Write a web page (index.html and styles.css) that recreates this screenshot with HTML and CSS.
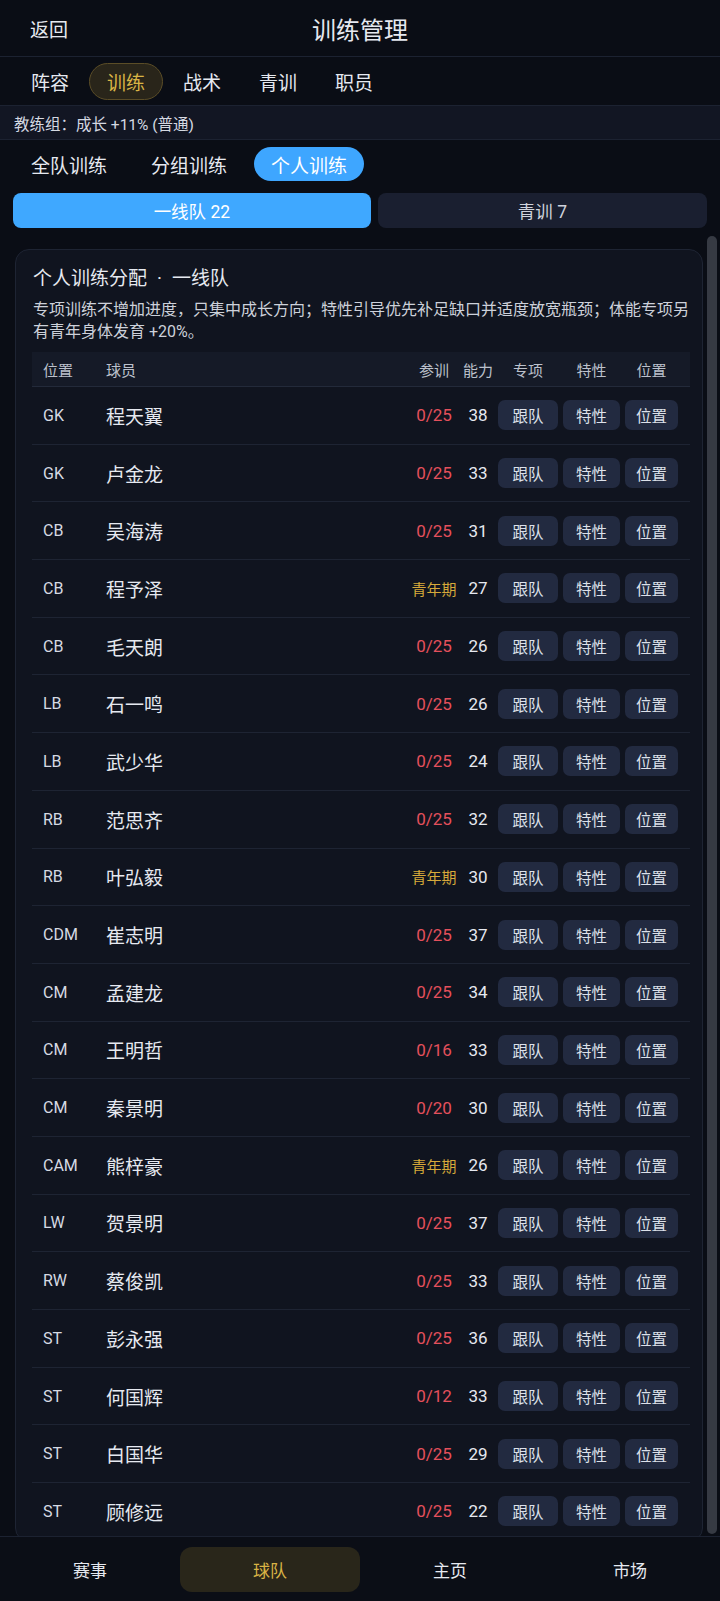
FILE: index.html
```html
<!DOCTYPE html>
<html lang="zh-CN">

<head>
    <meta charset="UTF-8">
    <meta name="viewport" content="width=device-width, initial-scale=1.0">
    <title>训练管理</title>
    <link rel="stylesheet" href="styles.css">
</head>

<body>
    <header class="topbar">
        <span class="back">返回</span>
        <h1 class="title">训练管理</h1>
        <span></span>
    </header>

    <nav class="tabs">
        <span class="tab">阵容</span>
        <span class="tab active">训练</span>
        <span class="tab">战术</span>
        <span class="tab">青训</span>
        <span class="tab">职员</span>
    </nav>

    <div class="coach">教练组：成长 +11% (普通)</div>

    <div class="modes">
        <span class="mode">全队训练</span>
        <span class="mode">分组训练</span>
        <span class="mode active">个人训练</span>
    </div>

    <div class="squads">
        <button class="squad active">一线队 22</button>
        <button class="squad">青训 7</button>
    </div>

    <main class="scroller">
        <section class="card">
            <h2 class="card-title">个人训练分配<span class="sep">·</span>一线队</h2>
            <p class="note">专项训练不增加进度，只集中成长方向；特性引导优先补足缺口并适度放宽瓶颈；体能专项另有青年身体发育 +20%。</p>

            <div class="table" id="playerTable">
                <div class="row head">
                    <span>位置</span>
                    <span>球员</span>
                    <span class="c">参训</span>
                    <span class="c">能力</span>
                    <span class="c">专项</span>
                    <span class="c">特性</span>
                    <span class="c">位置</span>
                </div>
            </div>
        </section>
        <div class="thumb"></div>
    </main>

    <footer class="bottom-nav">
        <span class="nav-item">赛事</span>
        <span class="nav-item active">球队</span>
        <span class="nav-item">主页</span>
        <span class="nav-item">市场</span>
    </footer>

    <script>
        // first team players: position, name, training count (or youth), ability
        const players = [
            ['GK', '程天翼', '0/25', 38],
            ['GK', '卢金龙', '0/25', 33],
            ['CB', '吴海涛', '0/25', 31],
            ['CB', '程予泽', '青年期', 27],
            ['CB', '毛天朗', '0/25', 26],
            ['LB', '石一鸣', '0/25', 26],
            ['LB', '武少华', '0/25', 24],
            ['RB', '范思齐', '0/25', 32],
            ['RB', '叶弘毅', '青年期', 30],
            ['CDM', '崔志明', '0/25', 37],
            ['CM', '孟建龙', '0/25', 34],
            ['CM', '王明哲', '0/16', 33],
            ['CM', '秦景明', '0/20', 30],
            ['CAM', '熊梓豪', '青年期', 26],
            ['LW', '贺景明', '0/25', 37],
            ['RW', '蔡俊凯', '0/25', 33],
            ['ST', '彭永强', '0/25', 36],
            ['ST', '何国辉', '0/12', 33],
            ['ST', '白国华', '0/25', 29],
            ['ST', '顾修远', '0/25', 22]
        ];

        const table = document.getElementById('playerTable');

        players.forEach(([pos, name, join, ovr]) => {
            const row = document.createElement('div');
            row.className = 'row';
            const joinClass = join === '青年期' ? 'join youth' : 'join';
            row.innerHTML =
                '<span class="pos">' + pos + '</span>' +
                '<span class="name">' + name + '</span>' +
                '<span class="' + joinClass + '">' + join + '</span>' +
                '<span class="ovr">' + ovr + '</span>' +
                '<button class="act">跟队</button>' +
                '<button class="act">特性</button>' +
                '<button class="act">位置</button>';
            table.appendChild(row);
        });
    </script>
</body>

</html>
```

FILE: styles.css
```css
* {
    box-sizing: border-box;
}

body {
    margin: 0;
    height: 1601px;
    display: flex;
    flex-direction: column;
    background: #0a0d15;
    color: #e6e9f0;
    font-family: Roboto, "Noto Sans CJK SC", sans-serif;
    overflow: hidden;
}

button {
    font: inherit;
    border: none;
    cursor: pointer;
}

/* top bar */
.topbar {
    height: 57px;
    flex: none;
    display: grid;
    grid-template-columns: 1fr auto 1fr;
    align-items: center;
    padding: 0 30px;
    border-bottom: 1px solid #1c2231;
}

.back {
    font-size: 19px;
}

.title {
    margin: 0;
    font-size: 24px;
    font-weight: 400;
}

/* section tabs */
.tabs {
    height: 49px;
    flex: none;
    display: flex;
    align-items: center;
    gap: 2px;
    padding-left: 13px;
    border-bottom: 1px solid #1c2231;
}

.tab {
    height: 37px;
    display: inline-flex;
    align-items: center;
    padding: 0 17px;
    font-size: 19px;
    border: 1px solid transparent;
    border-radius: 19px;
}

.tab.active {
    background: #29251a;
    border-color: #5b4d27;
    color: #d9b445;
}

.coach {
    height: 34px;
    flex: none;
    display: flex;
    align-items: center;
    padding-left: 14px;
    font-size: 15.5px;
    color: #d5d9e2;
    background: #121623;
    border-bottom: 1px solid #1c2231;
}

/* training modes */
.modes {
    flex: none;
    display: flex;
    gap: 10px;
    padding: 7px 14px 0;
}

.mode {
    height: 34px;
    display: inline-flex;
    align-items: center;
    padding: 0 17px;
    font-size: 19px;
    border-radius: 17px;
}

.mode.active {
    background: #3ea6ff;
    color: #fff;
}

.squads {
    flex: none;
    display: flex;
    gap: 7px;
    padding: 0 13px;
    margin-top: 12px;
}

.squad {
    flex: 1;
    height: 35px;
    border-radius: 8px;
    font-size: 17.5px;
    background: #1a1f30;
    color: #cfd3dc;
}

.squad.active {
    background: #3fa8ff;
    color: #fff;
    flex: 1.09;
}

/* list area */
.scroller {
    flex: 1;
    position: relative;
    overflow: hidden;
    padding-top: 21px;
}

.thumb {
    position: absolute;
    top: 8px;
    bottom: 2px;
    right: 3px;
    width: 10px;
    border-radius: 5px;
    background: #363a43;
}

.card {
    margin: 0 17px 0 15px;
    padding: 17px 12px 0 17px;
    background: #10141f;
    border: 1px solid #1e2433;
    border-radius: 14px;
}

.card-title {
    margin: 0;
    font-size: 19px;
    line-height: 24px;
    font-weight: 400;
}

.sep {
    margin: 0 10px;
}

.note {
    margin: 8px 0 0;
    font-size: 16px;
    line-height: 21.5px;
    color: #cdd1da;
}

.table {
    margin: 10px 0 0 -1px;
}

.row {
    display: grid;
    grid-template-columns: 58px 1fr 48px 30px 60px 57px 53px;
    column-gap: 5px;
    align-items: center;
    height: 57.7px;
    padding: 0 12px 0 11px;
    border-bottom: 1px solid #1e2433;
}

.row.head {
    height: 35px;
    background: #151a27;
    border-bottom-color: #232a3a;
    font-size: 15px;
    color: #bcc1cc;
}

.c {
    text-align: center;
}

.pos {
    font-size: 16px;
    color: #d6dae3;
}

.name {
    font-size: 19px;
}

.join {
    text-align: center;
    font-size: 17px;
    color: #e4505c;
    white-space: nowrap;
}

.join.youth {
    font-size: 15px;
    color: #d6a93a;
}

.ovr {
    text-align: center;
    font-size: 17px;
}

.act {
    height: 30px;
    border-radius: 7px;
    background: #222a40;
    color: #dde1ea;
    font-size: 15.5px;
    padding: 0;
}

/* bottom navigation */
.bottom-nav {
    height: 65px;
    flex: none;
    display: grid;
    grid-template-columns: repeat(4, 1fr);
    padding: 10px 0 9px;
    border-top: 1px solid #1c2231;
    background: #0b0e16;
}

.nav-item {
    display: flex;
    align-items: center;
    justify-content: center;
    font-size: 17px;
    border-radius: 12px;
}

.nav-item.active {
    background: #29261a;
    color: #d9b445;
}
```
